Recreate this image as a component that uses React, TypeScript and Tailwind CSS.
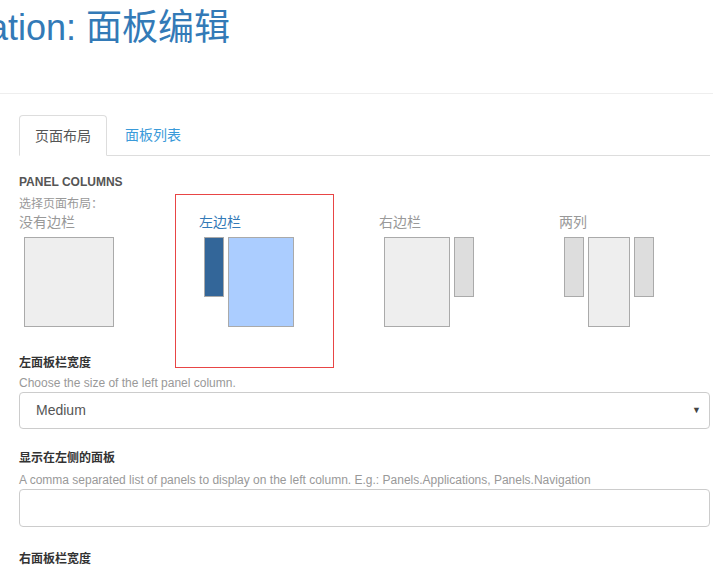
import React from 'react'

type Layout = 'none' | 'left' | 'right' | 'two'

const options: { key: Layout; label: string }[] = [
  { key: 'none', label: '没有边栏' },
  { key: 'left', label: '左边栏' },
  { key: 'right', label: '右边栏' },
  { key: 'two', label: '两列' },
]

const sans = "font-['Liberation_Sans','Noto_Sans_CJK_SC',sans-serif]"

function Diagram({ kind, active }: { kind: Layout; active: boolean }) {
  const main = active ? 'bg-[#abcdff]' : 'bg-[#eeeeee]'
  const side = active ? 'bg-[#336699]' : 'bg-[#dddddd]'
  const box = 'border border-[#aaaaaa]'

  if (kind === 'none') {
    return <div className={`${box} ${main} w-[90px] h-[90px]`} />
  }
  if (kind === 'left') {
    return (
      <div className="flex items-start gap-[4px]">
        <div className={`${box} ${side} w-[20px] h-[60px]`} />
        <div className={`${box} ${main} w-[66px] h-[90px]`} />
      </div>
    )
  }
  if (kind === 'right') {
    return (
      <div className="flex items-start gap-[4px]">
        <div className={`${box} ${main} w-[66px] h-[90px]`} />
        <div className={`${box} ${side} w-[20px] h-[60px]`} />
      </div>
    )
  }
  return (
    <div className="flex items-start gap-[4px]">
      <div className={`${box} ${side} w-[20px] h-[60px]`} />
      <div className={`${box} ${main} w-[42px] h-[90px]`} />
      <div className={`${box} ${side} w-[20px] h-[60px]`} />
    </div>
  )
}

export default function App() {
  const selected: Layout = 'left'

  return (
    <div className={`${sans} bg-white w-[713px] h-[566px] overflow-hidden text-[#333333]`}>
      {/* Page heading (page is scrolled sideways, so the start is off-screen) */}
      <div className="pt-[8px]">
        <h1 className="text-[36px] leading-[40px] text-[#337ab7] font-normal whitespace-nowrap -ml-[12px]">
          ation: 面板编辑
        </h1>
      </div>
      <div className="mt-[45px] border-t border-[#eeeeee]" />

      <div className="pl-[19px] pr-[3px]">
        {/* Tabs */}
        <div className="mt-[20px] flex items-end border-b border-[#dddddd]">
          <div className="-mb-px border border-[#dddddd] border-b-white rounded-t-[4px] bg-white px-[15px] pt-[10px] pb-[9px] text-[14px] leading-[20px] text-[#555555]">
            页面布局
          </div>
          <div className="ml-[2px] border border-transparent px-[15px] pt-[10px] pb-[9px] text-[14px] leading-[20px] text-[#3a9ad9]">
            面板列表
          </div>
        </div>

        {/* Panel columns */}
        <div className="mt-[18px] text-[12px] leading-[17px] font-bold text-[#555555]">PANEL COLUMNS</div>
        <div className="mt-[5px] text-[12px] leading-[17px] text-[#999999]">选择页面布局：</div>

        <div className="-mt-[19px] -ml-[24px] h-[161px] flex items-start gap-[21px]">
          {options.map((o) => {
            const active = o.key === selected
            return (
              <div
                key={o.key}
                className={`w-[159px] shrink-0 pl-[23px] pt-[17px] border ${
                  active ? 'border-[#e84545] h-[174px]' : 'border-transparent h-[161px]'
                }`}
              >
                <div className={`text-[14px] leading-[20px] ${active ? 'text-[#337ab7]' : 'text-[#999999]'}`}>
                  {o.label}
                </div>
                <div className="mt-[5px] ml-[5px]">
                  <Diagram kind={o.key} active={active} />
                </div>
              </div>
            )
          })}
        </div>

        {/* Left column width */}
        <div className="text-[12px] leading-[17px] font-bold">左面板栏宽度</div>
        <div className="mt-[3px] text-[12px] leading-[17px] text-[#999999]">Choose the size of the left panel column.</div>
        <div className="h-[37px] border border-[#cccccc] rounded-[4px] flex items-center justify-between pl-[16px] pr-[8px] text-[14px] text-[#555555]">
          <span>Medium</span>
          <span className="text-[9px] text-[#444444]">▼</span>
        </div>

        {/* Left panels */}
        <div className="mt-[21px] text-[12px] leading-[17px] font-bold">显示在左侧的面板</div>
        <div className="mt-[5px] text-[12px] leading-[17px] text-[#999999]">
          A comma separated list of panels to display on the left column. E.g.: Panels.Applications, Panels.Navigation
        </div>
        <div className="h-[38px] border border-[#cccccc] rounded-[4px]" />

        {/* Right column width */}
        <div className="mt-[24px] text-[12px] leading-[17px] font-bold">右面板栏宽度</div>
      </div>
    </div>
  )
}
